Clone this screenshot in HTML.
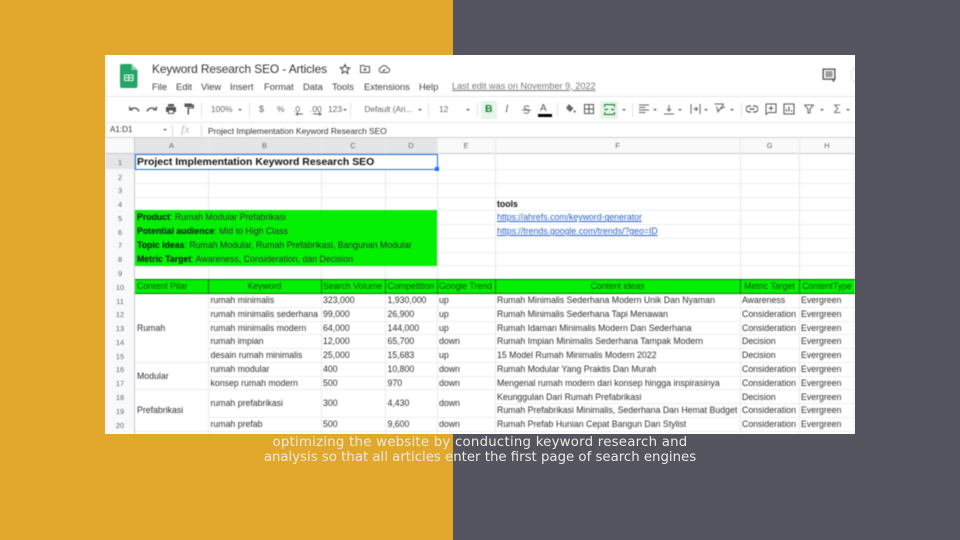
<!DOCTYPE html>
<html><head><meta charset="utf-8"><style>
html,body{margin:0;padding:0;width:960px;height:540px;overflow:hidden;background:#55555f;font-family:"Liberation Sans",sans-serif}
#l{position:absolute;left:0;top:0;width:453px;height:540px;background:#e2a82b}
#s{position:absolute;left:105px;top:55px;width:750px;height:379px;background:#fff;overflow:hidden}
#w{position:absolute;left:-105px;top:-55px;width:960px;height:540px;filter:blur(.45px)}
#w div,#w span,#w svg{position:absolute}
#w span{white-space:nowrap}
.m{top:79.500px;font-size:9.4px;color:#3c4043;line-height:13px}
.tb{font-size:8.4px;color:#666;top:103px;line-height:13px}
.ar{width:0;height:0;border-left:2.5px solid transparent;border-right:2.5px solid transparent;border-top:2.5px solid #5f6368;top:109px}
.sep{width:1px;height:14px;top:103px;background:#e2e3e5}
.ch{top:138px;height:15px;line-height:15px;font-size:7.5px;color:#666;text-align:center}
.rh{left:105px;width:30px;text-align:center;font-size:7.4px;color:#666;line-height:13.78px;height:13.78px;margin-top:1.5px}
.r{left:0;width:960px;height:13.78px;line-height:14px;font-size:8.75px;color:#2f2f2f}
.A{left:137px}.B{left:210.5px}.C{left:323px}.D{left:387.5px}.E{left:439px}.F{left:497px}.G{left:742px}.H{left:801px}
.hl{left:135px;width:720px;height:1px;background:#ebecec}
.vl{width:1px;top:153px;height:281px;background:#e9eaeb}
b{font-weight:bold;color:#111}
#sub{color:#ece9e2;font-family:"DejaVu Sans",sans-serif;font-size:13.3px;line-height:15px;text-align:center;position:absolute;left:130px;top:434.500px;width:700px}
#sub span{letter-spacing:.24px}
</style></head><body>
<div id="l"></div>
<div id="s"><div id="w">

<div style="left:105px;top:55px;width:2px;height:379px;background:#fff7e0"></div>
<svg style="left:120px;top:64px" width="18" height="24" viewBox="0 0 18 24"><path d="M2 0H11.5L17.5 6V22a2 2 0 0 1-2 2H2a2 2 0 0 1-2-2V2a2 2 0 0 1 2-2z" fill="#23a566"/><path d="M11.5 0L17.5 6H11.5z" fill="#8ed1b1"/><path d="M4 10.5H13.5V17H4zM5 11.5V13.2H8.2V11.5zM9.3 11.5V13.2H12.5V11.5zM5 14.3V16H8.2V14.3zM9.3 14.3V16H12.5V14.3z" fill="#f1f8f4" fill-rule="evenodd"/></svg>
<span style="left:152px;top:61px;font-size:11.9px;letter-spacing:-.09px;line-height:16px;color:#333">Keyword Research SEO - Articles</span>
<svg style="left:339px;top:63px" width="12" height="12" viewBox="0 0 24 24"><path d="M12 3l2.7 6.2 6.8.6-5.1 4.5 1.5 6.7L12 17l-5.9 3.5 1.5-6.7-5.1-4.5 6.8-.6z" fill="none" stroke="#444" stroke-width="2"/></svg>
<svg style="left:359px;top:63px" width="12" height="12" viewBox="0 0 24 24"><path d="M3 5h7l2 2h9v12H3zM12 10v6M9 13h6" fill="none" stroke="#555" stroke-width="2"/></svg>
<svg style="left:378px;top:63px" width="12" height="12" viewBox="0 0 24 24"><path d="M7 19a5 5 0 0 1-1-9.8A7 7 0 0 1 19 10a4.5 4.5 0 0 1-.5 9zM9 14l2 2 4-4" fill="none" stroke="#555" stroke-width="2"/></svg>
<span class="m" style="left:152px">File</span><span class="m" style="left:176px">Edit</span><span class="m" style="left:201px">View</span><span class="m" style="left:230px">Insert</span><span class="m" style="left:264px">Format</span><span class="m" style="left:303px">Data</span><span class="m" style="left:332px">Tools</span><span class="m" style="left:364px">Extensions</span><span class="m" style="left:419px">Help</span>
<span class="m" style="left:452px;color:#777;text-decoration:underline;font-size:9.15px">Last edit was on November 9, 2022</span>
<svg style="left:822px;top:68px" width="14" height="14" viewBox="0 0 24 24"><path d="M2 2h20v17h-2v3l-3-3H2z" fill="none" stroke="#555" stroke-width="2.4"/><path d="M6 7h12M6 10.5h12M6 14h12" stroke="#555" stroke-width="2"/></svg>
<div style="left:851px;top:65px;width:18px;height:18px;border:1px solid #e4e4e4;border-radius:50%"></div>

<div style="left:105px;top:96px;width:750px;height:1px;background:#e6e7e8"></div>
<div style="left:105px;top:122px;width:750px;height:1px;background:#e6e7e8"></div>
<div style="left:105px;top:137px;width:750px;height:1px;background:#d0d1d3"></div>

<svg style="left:128px;top:104px" width="12" height="10" viewBox="0 0 24 20"><path d="M22 15C20 9 14 7 9 8.500L5 12" fill="none" stroke="#666" stroke-width="3"/><path d="M2 13H11L2 4z" fill="#666"/></svg>
<svg style="left:146px;top:104px" width="12" height="10" viewBox="0 0 24 20"><path d="M2 15C4 9 10 7 15 8.500L19 12" fill="none" stroke="#666" stroke-width="3"/><path d="M22 13H13L22 4z" fill="#666"/></svg>
<svg style="left:165px;top:103px" width="12" height="12" viewBox="0 0 24 24"><path d="M6 2h12v5H6zM2 8h20v10h-4v4H6v-4H2z" fill="#555"/><path d="M8 15h8v5H8z" fill="#fff"/></svg>
<svg style="left:184px;top:103px" width="11" height="12" viewBox="0 0 22 24"><path d="M1 1h15v7H1zM16 3h4v8H10v12H7V9h10" fill="#555"/></svg>
<div class="sep" style="left:201px"></div>
<span class="tb" style="left:211px">100%</span><div class="ar" style="left:238px"></div>
<div class="sep" style="left:249px"></div>
<span class="tb" style="left:259px;font-size:9px">$</span><span class="tb" style="left:277px">%</span>
<span class="tb" style="left:293px">.0</span><svg style="left:295px;top:112px" width="9" height="4"><path d="M8 2H1M3 .5L1 2l2 1.500" fill="none" stroke="#666"/></svg>
<span class="tb" style="left:310px">.00</span><svg style="left:313px;top:112px" width="9" height="4"><path d="M0 2H8M6 .5L8 2 6 3.500" fill="none" stroke="#666"/></svg>
<span class="tb" style="left:328px">123</span><div class="ar" style="left:343px"></div>
<div class="sep" style="left:350px"></div>
<span class="tb" style="left:364.500px;font-size:8.2px">Default (Ari...</span><div class="ar" style="left:417.500px"></div>
<div class="sep" style="left:428px"></div>
<span class="tb" style="left:439px">12</span><div class="ar" style="left:466px"></div>
<div class="sep" style="left:477px"></div>

<div style="left:481px;top:101px;width:16px;height:18px;background:#e6f4ea;border-radius:2px"></div>
<span style="left:485px;top:103px;font-size:10.500px;line-height:13px;font-weight:bold;color:#188038">B</span>
<span style="left:505px;top:103px;font-size:10.500px;line-height:13px;font-style:italic;color:#666;font-family:'Liberation Serif',serif">I</span>
<svg style="left:521.500px;top:104.500px" width="9" height="10" viewBox="0 0 20 22"><path d="M16 4C14 1 6 1 5 5c-1 4 10 5 10 10 0 4-8 5-11 1M0 11h20" fill="none" stroke="#666" stroke-width="2"/></svg>
<span style="left:540px;top:102px;font-size:10px;line-height:13px;color:#555">A</span>
<div style="left:538px;top:114px;width:13.500px;height:2.500px;background:#000"></div>
<div class="sep" style="left:557px"></div>
<svg style="left:564px;top:103px" width="12" height="11" viewBox="0 0 24 22"><path d="M10 2l9 9-7 7-8-8z" fill="#666"/><circle cx="21.500" cy="17" r="2.200" fill="#666"/></svg>
<svg style="left:584px;top:104px" width="10" height="10" viewBox="0 0 20 20"><path d="M1 1h18v18H1zM10 1v18M1 10h18" fill="none" stroke="#555" stroke-width="2"/></svg>
<div style="left:600px;top:101px;width:18px;height:18px;background:#e6f4ea;border-radius:2px"></div>
<svg style="left:603.500px;top:104px" width="11" height="11" viewBox="0 0 22 22"><path d="M1 6V1h20v5M1 16v5h20v-5M1 11h7M21 11h-7" fill="none" stroke="#188038" stroke-width="2.400"/></svg>
<div class="ar" style="left:622px"></div>
<div class="sep" style="left:632px"></div>
<svg style="left:639px;top:104px" width="10" height="10" viewBox="0 0 20 20"><path d="M0 2h20M0 7h13M0 12h20M0 17h13" stroke="#666" stroke-width="2"/></svg><div class="ar" style="left:653px"></div>
<svg style="left:664px;top:104px" width="10" height="11" viewBox="0 0 20 22"><path d="M10 2v12M6 10l4 4 4-4M0 20h20" fill="none" stroke="#666" stroke-width="2"/></svg><div class="ar" style="left:678px"></div>
<svg style="left:690px;top:104px" width="11" height="10" viewBox="0 0 22 20"><path d="M2 0v20M20 0v20M7 10h7M11 6l4 4-4 4" fill="none" stroke="#666" stroke-width="2"/></svg><div class="ar" style="left:704px"></div>
<svg style="left:714px;top:103px" width="12" height="11" viewBox="0 0 24 22"><path d="M1 2h18L8 18 5 7M9 14l13-7" fill="none" stroke="#666" stroke-width="2"/></svg><div class="ar" style="left:730px"></div>
<div class="sep" style="left:741px"></div>
<svg style="left:746px;top:105px" width="12" height="8" viewBox="0 0 24 16"><path d="M10 2H6a6 6 0 0 0 0 12h4M14 2h4a6 6 0 0 1 0 12h-4M7 8h10" fill="none" stroke="#555" stroke-width="2.400"/></svg>
<svg style="left:765px;top:103px" width="12" height="12" viewBox="0 0 24 24"><path d="M2 2h20v17H7l-5 4zM12 6v9M7.500 10.500h9" fill="none" stroke="#555" stroke-width="2"/></svg>
<svg style="left:783px;top:103px" width="12" height="12" viewBox="0 0 24 24"><path d="M2 2h20v20H2zM7 17v-5M12 17V7M17 17v-3" fill="none" stroke="#555" stroke-width="2.200"/></svg>
<svg style="left:804px;top:104px" width="10" height="10" viewBox="0 0 20 20"><path d="M1 2h18l-7 8v8H8v-8z" fill="none" stroke="#666" stroke-width="2"/></svg><div class="ar" style="left:820px"></div>
<span style="left:833.500px;top:102px;font-size:12px;line-height:14px;color:#666">Σ</span><div class="ar" style="left:846px"></div>

<span style="left:110px;top:124px;font-size:8.100px;line-height:12px;color:#333">A1:D1</span><div class="ar" style="left:163px;top:129px"></div>
<div style="left:172px;top:125px;width:1px;height:11px;background:#dcdde0"></div>
<span style="left:181px;top:122px;font-size:12px;line-height:15px;color:#bbb;font-style:italic;font-family:'Liberation Serif',serif">fx</span>
<div style="left:201px;top:125px;width:1px;height:11px;background:#dcdde0"></div>
<span style="left:208px;top:124.500px;font-size:8.400px;line-height:12px;color:#333">Project Implementation Keyword Research SEO</span>

<div style="left:105px;top:138px;width:750px;height:15px;background:#f8f9fa"></div>
<div style="left:135px;top:138px;width:302px;height:15px;background:#e4e5e7"></div>
<div style="left:105px;top:153px;width:30px;height:281px;background:#f8f9fa"></div>
<div style="left:105px;top:154px;width:30px;height:15px;background:#e4e5e7"></div>
<div style="left:105px;top:153px;width:750px;height:1px;background:#c8c9cc"></div>
<div style="left:134px;top:138px;width:1px;height:296px;background:#c8c9cc"></div>

<div class="ch" style="left:135px;width:73px">A</div><div class="ch" style="left:208px;width:113px">B</div><div class="ch" style="left:321px;width:64px">C</div><div class="ch" style="left:385px;width:52px">D</div><div class="ch" style="left:437px;width:58px">E</div><div class="ch" style="left:495px;width:245px">F</div><div class="ch" style="left:740px;width:59px">G</div><div class="ch" style="left:799px;width:56px">H</div>
<div class="vl" style="left:208px;top:138px;height:296px"></div><div class="vl" style="left:321px;top:138px;height:296px"></div><div class="vl" style="left:385px;top:138px;height:296px"></div><div class="vl" style="left:437px;top:138px;height:296px"></div><div class="vl" style="left:495px;top:138px;height:296px"></div><div class="vl" style="left:740px;top:138px;height:296px"></div><div class="vl" style="left:799px;top:138px;height:296px"></div><div class="vl" style="left:854px;top:138px;height:296px"></div>

<div class="hl" style="top:169px"></div><div class="hl" style="top:183px"></div><div class="hl" style="top:197px"></div><div class="hl" style="top:210px"></div><div class="hl" style="top:224px"></div><div class="hl" style="top:238px"></div><div class="hl" style="top:252px"></div><div class="hl" style="top:265px"></div><div class="hl" style="top:279px"></div><div class="hl" style="top:293px"></div><div class="hl" style="top:307px"></div><div class="hl" style="top:321px"></div><div class="hl" style="top:334px"></div><div class="hl" style="top:348px"></div><div class="hl" style="top:362px"></div><div class="hl" style="top:376px"></div><div class="hl" style="top:389px"></div><div class="hl" style="top:403px"></div><div class="hl" style="top:417px"></div><div class="hl" style="top:431px"></div>

<div style="left:135px;top:294px;width:73px;height:137px;background:#fff"></div>
<div class="hl" style="top:362px;width:73px"></div><div class="hl" style="top:389px;width:73px"></div>
<div style="left:209px;top:390px;width:286px;height:27px;background:#fff"></div>
<div class="vl" style="left:321px;top:390px;height:27px"></div><div class="vl" style="left:385px;top:390px;height:27px"></div><div class="vl" style="left:437px;top:390px;height:27px"></div>

<div style="left:135px;top:154px;width:302px;height:15px;background:#fff"></div>
<div style="left:135px;top:154px;width:300.500px;height:13.500px;border:1px solid #1a73e8"></div>
<div style="left:434.500px;top:167px;width:4px;height:4px;background:#1a73e8"></div>
<span style="left:137px;top:154.500px;font-size:10.450px;line-height:15px;font-weight:bold;color:#111">Project Implementation Keyword Research SEO</span>

<div style="left:135px;top:210px;width:302px;height:55.500px;background:#03f003"></div>
<div style="left:135px;top:279px;width:720px;height:14.500px;background:#03f003"></div>
<div style="left:135px;top:279px;width:720px;height:1px;background:#0d6a0d"></div>
<div style="left:135px;top:293px;width:720px;height:1px;background:#0d6a0d"></div>
<div style="left:208px;top:279px;width:1px;height:14px;background:#0d6a0d"></div><div style="left:321px;top:279px;width:1px;height:14px;background:#0d6a0d"></div><div style="left:385px;top:279px;width:1px;height:14px;background:#0d6a0d"></div><div style="left:437px;top:279px;width:1px;height:14px;background:#0d6a0d"></div><div style="left:495px;top:279px;width:1px;height:14px;background:#0d6a0d"></div><div style="left:740px;top:279px;width:1px;height:14px;background:#0d6a0d"></div><div style="left:799px;top:279px;width:1px;height:14px;background:#0d6a0d"></div>

<div class="rh" style="top:154.500px">1</div><div class="rh" style="top:169px">2</div><div class="rh" style="top:182.800px">3</div><div class="rh" style="top:196.600px">4</div><div class="rh" style="top:210.300px">5</div><div class="rh" style="top:224.100px">6</div><div class="rh" style="top:237.900px">7</div><div class="rh" style="top:251.700px">8</div><div class="rh" style="top:265.500px">9</div><div class="rh" style="top:279.200px">10</div><div class="rh" style="top:293px">11</div><div class="rh" style="top:306.800px">12</div><div class="rh" style="top:320.600px">13</div><div class="rh" style="top:334.400px">14</div><div class="rh" style="top:348.100px">15</div><div class="rh" style="top:361.900px">16</div><div class="rh" style="top:375.700px">17</div><div class="rh" style="top:389.500px">18</div><div class="rh" style="top:403.300px">19</div><div class="rh" style="top:417px">20</div>

<div class="r" style="top:196.600px"><span class="F"><b>tools</b></span></div>
<div class="r" style="top:210.300px"><span class="A"><b>Product</b>: Rumah Modular Prefabrikasi</span><span class="F" style="color:#2a62c8;text-decoration:underline">https://ahrefs.com/keyword-generator</span></div>
<div class="r" style="top:224.100px"><span class="A"><b>Potential audience</b>: Mid to High Class</span><span class="F" style="color:#2a62c8;text-decoration:underline">https://trends.google.com/trends/?geo=ID</span></div>
<div class="r" style="top:237.900px"><span class="A"><b>Topic ideas</b>: Rumah Modular, Rumah Prefabrikasi, Bangunan Modular</span></div>
<div class="r" style="top:251.700px"><span class="A"><b>Metric Target</b>: Awareness, Consideration, dan Decision</span></div>

<div class="r" style="top:279.200px;color:#0b4f0b"><span class="A">Content Pilar</span><span style="left:208px;width:113px;text-align:center">Keyword</span><span class="C">Search Volume</span><span class="D">Competition</span><span class="E">Google Trend</span><span style="left:495px;width:245px;text-align:center">Content ideas</span><span style="left:740px;width:59px;text-align:center">Metric Target</span><span style="left:799px;width:56px;text-align:center">ContentType</span></div>

<div class="r" style="top:293px"><span class="B">rumah minimalis</span><span class="C">323,000</span><span class="D">1,930,000</span><span class="E">up</span><span class="F">Rumah Minimalis Sederhana Modern Unik Dan Nyaman</span><span class="G">Awareness</span><span class="H">Evergreen</span></div>
<div class="r" style="top:306.800px"><span class="B">rumah minimalis sederhana</span><span class="C">99,000</span><span class="D">26,900</span><span class="E">up</span><span class="F">Rumah Minimalis Sederhana Tapi Menawan</span><span class="G">Consideration</span><span class="H">Evergreen</span></div>
<div class="r" style="top:320.600px"><span class="A">Rumah</span><span class="B">rumah minimalis modern</span><span class="C">64,000</span><span class="D">144,000</span><span class="E">up</span><span class="F">Rumah Idaman Minimalis Modern Dan Sederhana</span><span class="G">Consideration</span><span class="H">Evergreen</span></div>
<div class="r" style="top:334.400px"><span class="B">rumah impian</span><span class="C">12,000</span><span class="D">65,700</span><span class="E">down</span><span class="F">Rumah Impian Minimalis Sederhana Tampak Modern</span><span class="G">Decision</span><span class="H">Evergreen</span></div>
<div class="r" style="top:348.100px"><span class="B">desain rumah minimalis</span><span class="C">25,000</span><span class="D">15,683</span><span class="E">up</span><span class="F">15 Model Rumah Minimalis Modern 2022</span><span class="G">Decision</span><span class="H">Evergreen</span></div>
<div class="r" style="top:361.900px"><span class="B">rumah modular</span><span class="C">400</span><span class="D">10,800</span><span class="E">down</span><span class="F">Rumah Modular Yang Praktis Dan Murah</span><span class="G">Consideration</span><span class="H">Evergreen</span></div>
<div class="r" style="top:368.800px"><span class="A">Modular</span></div>
<div class="r" style="top:375.700px"><span class="B">konsep rumah modern</span><span class="C">500</span><span class="D">970</span><span class="E">down</span><span class="F">Mengenal rumah modern dari konsep hingga inspirasinya</span><span class="G">Consideration</span><span class="H">Evergreen</span></div>
<div class="r" style="top:389.500px"><span class="F">Keunggulan Dari Rumah Prefabrikasi</span><span class="G">Decision</span><span class="H">Evergreen</span></div>
<div class="r" style="top:396.400px"><span class="B">rumah prefabrikasi</span><span class="C">300</span><span class="D">4,430</span><span class="E">down</span></div>
<div class="r" style="top:403.300px"><span class="A">Prefabrikasi</span><span class="F">Rumah Prefabrikasi Minimalis, Sederhana Dan Hemat Budget</span><span class="G">Consideration</span><span class="H">Evergreen</span></div>
<div class="r" style="top:417px"><span class="B">rumah prefab</span><span class="C">500</span><span class="D">9,600</span><span class="E">down</span><span class="F">Rumah Prefab Hunian Cepat Bangun Dan Stylist</span><span class="G">Consideration</span><span class="H">Evergreen</span></div>
</div></div>
<div id="sub"><span>optimizing the website by conducting keyword research and</span><br>analysis so that all articles enter the first page of search engines</div>
</body></html>
